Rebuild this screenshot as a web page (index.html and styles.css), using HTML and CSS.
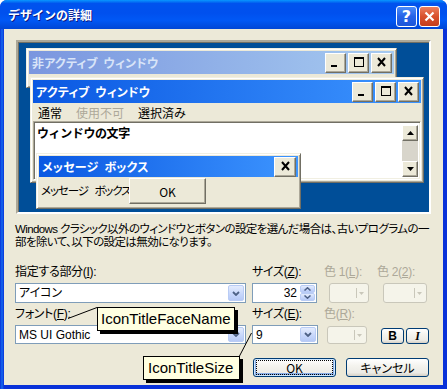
FILE: index.html
```html
<!DOCTYPE html>
<html lang="ja">
<head>
  <meta charset="UTF-8">
  <title>デザインの詳細</title>
  <link rel="stylesheet" href="styles.css">
</head>
<body>
  <div class="dialog">
    <div class="titlebar">
      <span class="title">デザインの詳細</span>
      <div class="caption-buttons">
        <span class="cap-btn help">?</span>
        <span class="cap-btn close">
          <svg width="11" height="11" viewBox="0 0 11 11"><path d="M1.5 1.5l8 8M9.5 1.5l-8 8" stroke="#fff" stroke-width="2.2"/></svg>
        </span>
      </div>
    </div>

    <div class="frame">
      <div class="client">
        <!-- preview of the current scheme -->
        <div class="preview">
          <div class="win inactive">
            <div class="caption">
              <span class="cap-text">非アクティブ ウィンドウ</span>
              <div class="sys-btns">
                <span class="sys-btn"><svg width="13" height="11" viewBox="0 0 13 11"><rect x="2" y="8" width="6" height="2"/></svg></span>
                <span class="sys-btn"><svg width="13" height="11" viewBox="0 0 13 11"><rect x="2.5" y="0.5" width="9" height="9" fill="none" stroke="#000"/><rect x="2" y="0" width="10" height="2"/></svg></span>
                <span class="sys-btn"><svg width="13" height="11" viewBox="0 0 13 11"><path d="M3 1l7 8M10 1l-7 8" stroke="#000" stroke-width="2"/></svg></span>
              </div>
            </div>
          </div>

          <div class="win active">
            <div class="caption">
              <span class="cap-text">アクティブ ウィンドウ</span>
              <div class="sys-btns">
                <span class="sys-btn"><svg width="13" height="11" viewBox="0 0 13 11"><rect x="2" y="8" width="6" height="2"/></svg></span>
                <span class="sys-btn"><svg width="13" height="11" viewBox="0 0 13 11"><rect x="2.5" y="0.5" width="9" height="9" fill="none" stroke="#000"/><rect x="2" y="0" width="10" height="2"/></svg></span>
                <span class="sys-btn"><svg width="13" height="11" viewBox="0 0 13 11"><path d="M3 1l7 8M10 1l-7 8" stroke="#000" stroke-width="2"/></svg></span>
              </div>
            </div>
            <div class="menubar">
              <span>通常</span>
              <span class="disabled">使用不可</span>
              <span>選択済み</span>
            </div>
            <div class="text-area">
              <span class="win-text">ウィンドウの文字</span>
              <div class="scrollbar">
                <span class="sb-btn"><svg width="7" height="4" viewBox="0 0 7 4"><path d="M3.5 0L7 4H0z"/></svg></span>
                <span class="sb-track"></span>
                <span class="sb-btn"><svg width="7" height="4" viewBox="0 0 7 4"><path d="M0 0h7L3.5 4z"/></svg></span>
              </div>
            </div>
          </div>

          <div class="win msgbox">
            <div class="caption">
              <span class="cap-text">メッセージ ボックス</span>
              <div class="sys-btns">
                <span class="sys-btn wide"><svg width="13" height="11" viewBox="0 0 13 11"><path d="M3 1l7 8M10 1l-7 8" stroke="#000" stroke-width="2"/></svg></span>
              </div>
            </div>
            <div class="msg-body">
              <span class="msg-text">メッセージ ボックスの文字</span>
              <span class="classic-btn">OK</span>
            </div>
          </div>
        </div>

        <p class="note">Windows クラシック以外のウィンドウとボタンの設定を選んだ場合は、古いプログラムの一<br>部を除いて、以下の設定は無効になります。</p>

        <div class="fields">
          <label class="lbl">指定する部分(<u>I</u>):</label>
          <label class="lbl">サイズ(<u>Z</u>):</label>
          <label class="lbl off">色 1(<u>L</u>):</label>
          <label class="lbl off">色 2(<u>2</u>):</label>

          <div class="combo">
            <span class="combo-text">アイコン</span>
            <span class="drop"><svg width="8" height="5" viewBox="0 0 8 5"><path d="M1 1l3 3 3-3" fill="none" stroke="#4D6185" stroke-width="1.8"/></svg></span>
          </div>
          <div class="spin">
            <span class="spin-text">32</span>
            <span class="spin-btns">
              <span class="spin-btn"><svg width="7" height="4" viewBox="0 0 7 4"><path d="M0.5 3.5L3.5 0.8 6.5 3.5" fill="none" stroke="#4D6185" stroke-width="1.5"/></svg></span>
              <span class="spin-btn"><svg width="7" height="4" viewBox="0 0 7 4"><path d="M0.5 0.5L3.5 3.2 6.5 0.5" fill="none" stroke="#4D6185" stroke-width="1.5"/></svg></span>
            </span>
          </div>
          <div class="color-btn"><span class="sep"></span><svg width="5" height="3" viewBox="0 0 5 3"><path d="M0 0h5L2.5 3z" fill="#C9C7BA"/></svg></div>
          <div class="color-btn wide"><span class="sep"></span><svg width="5" height="3" viewBox="0 0 5 3"><path d="M0 0h5L2.5 3z" fill="#C9C7BA"/></svg></div>

          <label class="lbl">フォント(<u>F</u>):</label>
          <label class="lbl">サイズ(<u>E</u>):</label>
          <label class="lbl off">色(<u>R</u>):</label>
          <span></span>

          <div class="combo">
            <span class="combo-text">MS UI Gothic</span>
            <span class="drop"><svg width="8" height="5" viewBox="0 0 8 5"><path d="M1 1l3 3 3-3" fill="none" stroke="#4D6185" stroke-width="1.8"/></svg></span>
          </div>
          <div class="combo small">
            <span class="combo-text">9</span>
            <span class="drop"><svg width="8" height="5" viewBox="0 0 8 5"><path d="M1 1l3 3 3-3" fill="none" stroke="#4D6185" stroke-width="1.8"/></svg></span>
          </div>
          <div class="color-btn low"><span class="sep"></span><svg width="5" height="3" viewBox="0 0 5 3"><path d="M0 0h5L2.5 3z" fill="#C9C7BA"/></svg></div>
          <div class="style-btns">
            <span class="xp-btn tiny bold">B</span>
            <span class="xp-btn tiny italic">I</span>
          </div>
        </div>

        <div class="actions">
          <span class="xp-btn default"><span class="focus">OK</span></span>
          <span class="xp-btn">キャンセル</span>
        </div>

        <!-- annotation callouts -->
        <svg class="leaders" width="439" height="356">
          <path d="M64 289.5L93 278.5" stroke="#000" stroke-width="1"/>
          <path d="M247.5 304L235.5 327" stroke="#000" stroke-width="1"/>
        </svg>
        <div class="tip tip-face">IconTitleFaceName</div>
        <div class="tip tip-size">IconTitleSize</div>
      </div>
    </div>
  </div>
</body>
</html>
```

FILE: styles.css
```css
body {
  margin: 0;
  background: #fff;
  font-family: "Liberation Sans", "Noto Sans CJK JP", sans-serif;
  font-size: 12px;
  color: #000;
}
* {
  box-sizing: border-box;
}
.dialog {
  width: 447px;
  height: 389px;
  display: flex;
  flex-direction: column;
  border-radius: 7px 7px 0 0;
  overflow: hidden;
  background: #0831D9;
}
/* Title bar */
.titlebar {
  height: 29px;
  flex: none;
  display: flex;
  align-items: center;
  justify-content: space-between;
  padding: 0 7px 0 8px;
  background: linear-gradient(180deg, #0997FF 0%, #0053EE 12%, #0050EE 45%, #0058F5 70%, #0046D5 100%);
}
.title {
  color: #fff;
  font-weight: bold;
  font-size: 12px;
  font-family: "Noto Sans CJK JP", sans-serif;
  text-shadow: 1px 1px #0A1883;
}
.caption-buttons {
  display: flex;
  gap: 2px;
  margin-top: 3px;
}
.cap-btn {
  width: 21px;
  height: 21px;
  border: 1px solid #fff;
  border-radius: 3px;
  display: flex;
  align-items: center;
  justify-content: center;
  color: #fff;
}
.cap-btn.help {
  background: linear-gradient(180deg, #4A8CFA 0%, #2663E8 50%, #1D56D9 100%);
  font-weight: bold;
  font-size: 16px;
  font-family: "DejaVu Sans", sans-serif;
}
.cap-btn.close {
  background: linear-gradient(180deg, #EB7E5E 0%, #D9512D 50%, #C33D1C 100%);
}
/* Frame and client area */
.frame {
  flex: 1;
  display: flex;
  min-height: 0;
  padding: 0 4px 4px 4px;
  background: linear-gradient(90deg, #0831D9, #166AEE 2px, #0831D9 4px);
}
.client {
  flex: 1;
  min-width: 0;
  position: relative;
  overflow: hidden;
  background: #ECE9D8;
  padding: 11px 11px 0;
}
/* Scheme preview */
.preview {
  position: relative;
  margin: 0 1px;
  height: 174px;
  background: #004E98;
  border: 2px solid;
  border-color: #ACA899 #fff #fff #ACA899;
  box-shadow: inset 1px 1px #716F64;
}
.win {
  position: absolute;
  display: flex;
  flex-direction: column;
  background: #ECE9D8;
  border: 1px solid;
  border-color: #F1EFE2 #716F64 #716F64 #F1EFE2;
  box-shadow: inset 1px 1px #fff, inset -1px -1px #ACA899;
  padding: 2px;
}
.win.inactive {
  left: 8px;
  top: 6px;
  width: 371px;
  height: 40px;
}
.win.active {
  left: 12px;
  top: 35px;
  width: 394px;
  height: 106px;
}
.win.msgbox {
  left: 18px;
  top: 111px;
  width: 265px;
  height: 56px;
}
.caption {
  height: 23px;
  flex: none;
  display: flex;
  align-items: center;
  justify-content: space-between;
  padding: 0 2px 0 3px;
  background: linear-gradient(90deg, #0A58E2, #3D95FF);
}
.inactive .caption {
  background: linear-gradient(90deg, #7A96DF, #A6CAF0);
}
.msgbox .caption {
  height: 21px;
}
.cap-text {
  color: #fff;
  font-weight: bold;
  font-family: "Noto Sans CJK JP", sans-serif;
  font-feature-settings: "palt";
  letter-spacing: 0.2px;
  word-spacing: 3px;
}
.inactive .cap-text {
  color: #D8E4F8;
}
.sys-btns {
  display: flex;
  gap: 2px;
}
.sys-btn {
  width: 21px;
  height: 20px;
  display: flex;
  align-items: center;
  justify-content: center;
  background: #ECE9D8;
  border: 1px solid;
  border-color: #fff #716F64 #716F64 #fff;
  box-shadow: inset -1px -1px #ACA899;
}
.sys-btn.wide {
  width: 22px;
}
.menubar {
  height: 18px;
  flex: none;
  display: flex;
  align-items: center;
  gap: 14px;
  padding-left: 5px;
  font-family: "Noto Sans CJK JP", sans-serif;
  font-feature-settings: "palt";
}
.menubar .disabled {
  color: #ACA899;
}
.text-area {
  flex: 1;
  display: flex;
  justify-content: space-between;
  background: #fff;
  border: 1px solid;
  border-color: #ACA899 #fff #fff #ACA899;
  box-shadow: inset 1px 1px #716F64, inset -1px -1px #F1EFE2;
  padding: 2px 2px 2px 3px;
}
.win-text {
  font-weight: bold;
  font-family: "Noto Sans CJK JP", sans-serif;
  letter-spacing: -0.4px;
  line-height: 18px;
}
.scrollbar {
  width: 16px;
  display: flex;
  flex-direction: column;
  margin-top: 1px;
}
.sb-btn {
  height: 16px;
  flex: none;
  display: flex;
  align-items: center;
  justify-content: center;
  background: #ECE9D8;
  border: 1px solid;
  border-color: #fff #716F64 #716F64 #fff;
  box-shadow: inset -1px -1px #ACA899;
}
.sb-track {
  flex: 1;
  background: #D8D5CB;
}
.msg-body {
  flex: 1;
  display: flex;
  align-items: flex-start;
  padding-left: 2px;
}
/* the OK button sits over the end of the message, as in the original */
.msg-text {
  flex: 0 0 88px;
  overflow: hidden;
  white-space: nowrap;
  line-height: 27px;
  font-size: 11.5px;
  font-family: "Noto Sans CJK JP", sans-serif;
  font-feature-settings: "palt";
  letter-spacing: -1.1px;
  word-spacing: 5px;
}
.classic-btn {
  width: 77px;
  height: 26px;
  margin-top: 1px;
  display: flex;
  align-items: center;
  justify-content: center;
  background: #ECE9D8;
  border: 1px solid;
  border-color: #fff #716F64 #716F64 #fff;
  box-shadow: inset -1px -1px #ACA899;
  font-family: "Noto Sans CJK JP", sans-serif;
}
/* Explanation text */
.note {
  margin: 9px 0 0;
  line-height: 13px;
  white-space: nowrap;
  font-size: 11.5px;
  font-family: "Liberation Sans", "Noto Sans CJK JP", sans-serif;
  font-feature-settings: "palt";
  letter-spacing: -0.6px;
}
/* Item / font settings grid */
.fields {
  margin-top: 17px;
  display: grid;
  grid-template-columns: 237px 72px 53px 55px;
  grid-template-rows: 13px 20px 14px 19px;
  row-gap: 4px;
}
.lbl {
  align-self: end;
  line-height: 13px;
  white-space: nowrap;
  font-feature-settings: "palt";
  letter-spacing: -0.3px;
}
.lbl.off {
  color: #ACA899;
}
.combo {
  width: 231px;
  display: flex;
  align-items: stretch;
  justify-content: space-between;
  background: #fff;
  border: 1px solid #7F9DB9;
  padding: 1px;
}
.combo.small {
  width: 66px;
}
.combo-text {
  padding-left: 2px;
  line-height: 16px;
  font-feature-settings: "palt";
}
.drop,
.spin-btn {
  width: 16px;
  display: flex;
  align-items: center;
  justify-content: center;
  border: 1px solid #B9CCF5;
  border-radius: 2px;
  background: linear-gradient(180deg, #E4ECFD 0%, #C6D6FB 60%, #B6C9F6 100%);
}
.spin {
  width: 65px;
  display: flex;
  justify-content: space-between;
  background: #fff;
  border: 1px solid #7F9DB9;
  padding: 1px;
}
.spin-text {
  flex: 1;
  text-align: right;
  padding-right: 3px;
  line-height: 16px;
}
.spin-btns {
  display: flex;
  flex-direction: column;
}
.spin-btn {
  flex: 1;
  width: 15px;
}
.color-btn {
  width: 40px;
  height: 20px;
  margin-left: 5px;
  display: flex;
  align-items: center;
  justify-content: flex-end;
  gap: 2px;
  padding-right: 4px;
  background: #F5F4EA;
  border: 1px solid #C9C7BA;
  border-radius: 3px;
}
.color-btn.wide {
  width: 44px;
  margin-left: 6px;
}
.color-btn.low {
  height: 18px;
  align-self: end;
  margin-left: 3px;
}
.sep {
  width: 1px;
  height: 10px;
  background: #C9C7BA;
}
.style-btns {
  display: flex;
  gap: 2px;
  margin-left: 4px;
  align-self: end;
}
/* XP push buttons */
.xp-btn {
  width: 83px;
  height: 19px;
  display: flex;
  align-items: center;
  justify-content: center;
  border: 1px solid #003C74;
  border-radius: 3px;
  background: linear-gradient(180deg, #FFFFFF 0%, #F4F3EE 40%, #ECEBE6 80%, #D6D0C5 100%);
  font-family: "Noto Sans CJK JP", sans-serif;
  font-feature-settings: "palt";
}
.xp-btn.tiny {
  width: 23px;
  height: 16px;
  font-family: "Liberation Sans", sans-serif;
  font-weight: bold;
}
.xp-btn.italic {
  font-style: italic;
  font-family: "Liberation Serif", serif;
}
.xp-btn.default {
  box-shadow: inset 0 0 0 1px #CEE7FF, inset 0 -1px 0 2px #89ADE4;
}
.focus {
  width: 75px;
  height: 13px;
  display: flex;
  align-items: center;
  justify-content: center;
  outline: 1px dotted #000;
}
.actions {
  margin-top: 14px;
  padding-right: 3px;
  display: flex;
  justify-content: flex-end;
  gap: 10px;
}
/* Callouts over the form */
.leaders {
  position: absolute;
  left: 0;
  top: 0;
  pointer-events: none;
}
.tip {
  position: absolute;
  height: 24px;
  padding: 0 3px;
  line-height: 22px;
  font-family: "Liberation Sans", sans-serif;
  font-size: 15px;
  background: #FFFFE1;
  border: 1px solid #000;
  box-shadow: 3px 3px 0 #000;
}
.tip-face {
  left: 93px;
  top: 278px;
}
.tip-size {
  left: 139px;
  top: 327px;
  padding: 0 6px 0 4px;
}
```
